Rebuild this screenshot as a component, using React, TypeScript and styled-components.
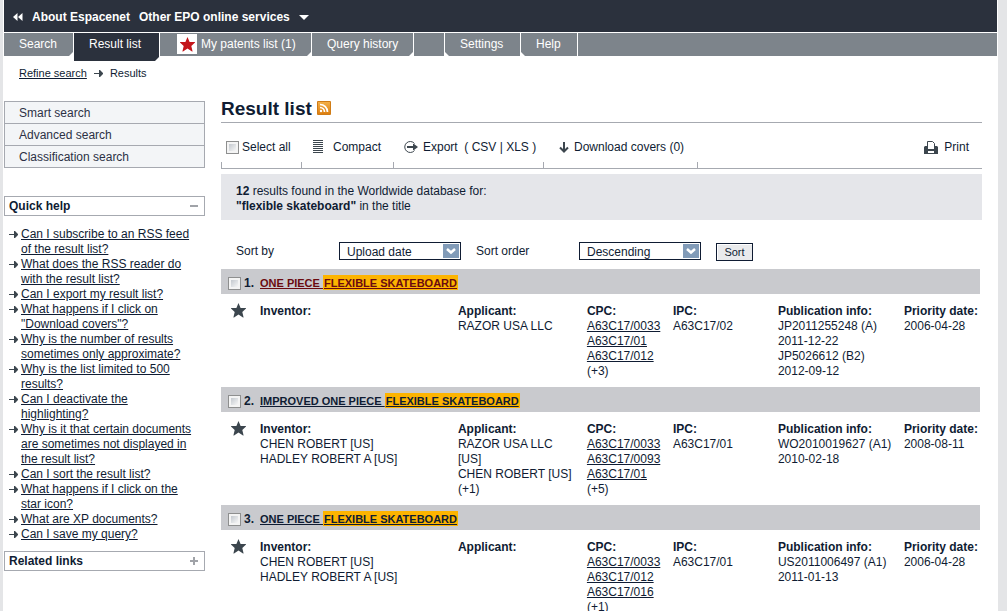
import React from "react";
import styled, { createGlobalStyle } from "styled-components";

const ink = "#0f1c33";
const navy = "#2b313d";
const steel = "#7d848b";
const line = "#a6a9b0";
const iconInk = "#3c464e";

const GlobalStyle = createGlobalStyle`
  * { box-sizing: border-box; }
  html { scrollbar-width: none; background: #e4e5e7; }
  body {
    margin: 0;
    font: 12px/15px "Liberation Sans", Arial, sans-serif;
    color: ${ink};
  }
  a { color: inherit; }
`;

const Viewport = styled.div`
  height: 100vh;
  overflow-y: auto;
  scrollbar-width: none;
  background: #e4e5e7;
`;

const Page = styled.div`
  min-height: 100%;
  margin: 0 9px 0 3px;
  padding: 0 1px;
  background: #fff;
`;

const TopBar = styled.header`
  display: flex;
  align-items: center;
  gap: 9px;
  height: 32px;
  padding: 2px 9px 0;
  background: ${navy};
  color: #fff;
  font-weight: bold;
`;

const TopLink = styled.a`
  display: flex;
  align-items: center;
  gap: 9px;
  text-decoration: none;
`;

const MenuButton = styled.button`
  display: flex;
  align-items: center;
  gap: 9px;
  padding: 0;
  border: 0;
  background: none;
  color: inherit;
  font: inherit;
`;

const Nav = styled.nav`
  display: flex;
  align-items: flex-start;
  gap: 1px;
  height: 29px;
  padding-top: 1px;
`;

const shapes = {
  right: "polygon(0 0, 100% 0, 100% calc(100% - 4px), calc(100% - 4px) 100%, 0 100%)",
  left: "polygon(0 0, 100% 0, 100% 100%, 4px 100%, 0 calc(100% - 4px))",
};

const Tab = styled.a<{ $width: number; $cut: keyof typeof shapes; $active?: boolean }>`
  display: flex;
  align-items: center;
  gap: 4px;
  width: ${(p) => p.$width}px;
  height: ${(p) => (p.$active ? 28 : 23)}px;
  padding-left: 15px;
  padding-bottom: ${(p) => (p.$active ? 6 : 1)}px;
  background: ${(p) => (p.$active ? navy : steel)};
  clip-path: ${(p) => shapes[p.$cut]};
  color: #fff;
  text-decoration: none;
  white-space: nowrap;
`;

const TabFill = styled.span<{ $width?: number }>`
  flex: ${(p) => (p.$width ? `0 0 ${p.$width}px` : "1")};
  height: 23px;
  background: ${steel};
`;

const StarBox = styled.span`
  display: flex;
  align-items: center;
  justify-content: center;
  width: 20px;
  height: 20px;
  margin-left: 2px;
  background: #fff;
`;

const Breadcrumb = styled.nav`
  display: flex;
  align-items: center;
  gap: 7px;
  height: 24px;
  padding-left: 15px;
  font-size: 11px;
`;

const Columns = styled.div`
  display: flex;
  gap: 16px;
  padding: 16px 15px 0 0;
`;

const Sidebar = styled.aside`
  flex: 0 0 201px;
`;

const SideMenu = styled.ul`
  margin: 0 0 28px;
  padding: 0;
  list-style: none;
  border: 1px solid ${line};
  background: #f3f5f7;
`;

const SideItem = styled.li`
  padding: 4px 14px 2px;
  & + & { border-top: 1px solid ${line}; }
  a { text-decoration: none; color: #2c3145; }
`;

const PanelButton = styled.button`
  display: flex;
  align-items: center;
  justify-content: space-between;
  width: 100%;
  height: 20px;
  padding: 0 5px 0 4px;
  border: 1px solid ${line};
  background: #fff;
  color: ${ink};
  font: bold 12px/15px "Liberation Sans", Arial, sans-serif;
`;

const HelpList = styled.ul`
  margin: 11px 0 9px;
  padding: 0 8px 0 5px;
  list-style: none;
`;

const HelpItem = styled.li`
  display: flex;
  gap: 3px;
  svg { flex: none; margin-top: 3px; }
`;

const HelpLink = styled.a`
  white-space: pre-line;
`;

const Main = styled.main`
  flex: 1;
  min-width: 0;
`;

const TitleRow = styled.div`
  display: flex;
  gap: 5px;
  height: 22px;
  border-bottom: 1px solid ${line};
`;

const Title = styled.h1`
  margin: 0;
  font-size: 19px;
  line-height: 16px;
`;

const Toolbar = styled.div`
  display: flex;
  align-items: flex-end;
  height: 46px;
  margin-bottom: 5px;
  border-bottom: 1px solid ${line};
`;

const Tool = styled.div<{ $width: number; $gap: number; $indent: number }>`
  position: relative;
  display: flex;
  align-items: center;
  gap: ${(p) => p.$gap}px;
  flex: 0 0 ${(p) => p.$width}px;
  height: 45px;
  padding: 3px 0 0 ${(p) => p.$indent}px;
  white-space: nowrap;
  a { text-decoration: none; }
  &::before {
    content: "";
    position: absolute;
    left: 0;
    bottom: 0;
    width: 1px;
    height: 6px;
    background: ${line};
  }
`;

const PrintTool = styled(Tool)`
  flex: 1;
  justify-content: flex-end;
  padding-right: 13px;
`;

const Check = styled.input.attrs({ type: "checkbox" })`
  appearance: none;
  flex: none;
  width: 13px;
  height: 13px;
  margin: 0;
  border: 1px solid #8e8f8f;
  background: linear-gradient(135deg, #c4c9cf, #f6f6f6) content-box, #f4f4f4;
  padding: 2px;
`;

const Summary = styled.p`
  margin: 0;
  padding: 10px 15px 6px;
  background: #e5e6ea;
`;

const SortForm = styled.form`
  display: flex;
  align-items: center;
  height: 49px;
  padding: 13px 15px 0;
`;

const SortLabel = styled.label`
  flex: 0 0 103px;
`;

const SelectBox = styled.span`
  position: relative;
  flex: 0 0 122px;
  margin-right: 15px;
  svg { position: absolute; right: 2px; top: 2px; pointer-events: none; }
`;

const Select = styled.select`
  appearance: none;
  display: block;
  width: 100%;
  height: 18px;
  padding: 2px 20px 0 7px;
  border: 1px solid ${ink};
  border-radius: 0;
  background: #fff;
  color: ${ink};
  font: 12px/15px "Liberation Sans", Arial, sans-serif;
`;

const SortButton = styled.button`
  width: 37px;
  height: 18px;
  margin-top: 2px;
  padding: 0;
  border: 1px solid ${ink};
  background: #e9eaec;
  box-shadow: inset 1px 1px #fff;
  color: ${ink};
  font: 11px/15px "Liberation Sans", Arial, sans-serif;
`;

const Results = styled.table`
  width: calc(100% - 2px);
  table-layout: fixed;
  border-collapse: collapse;
`;

const ResultHead = styled.th`
  height: 25px;
  padding: 0 7px;
  background: #c9cace;
  text-align: left;
`;

const HeadLine = styled.div`
  display: flex;
  align-items: center;
  padding-top: 3px;
  label { display: flex; align-items: center; gap: 3px; width: 32px; }
`;

const DocLink = styled.a<{ $visited?: boolean }>`
  color: ${(p) => (p.$visited ? "#6b0a10" : ink)};
  font-size: 11px;
  white-space: pre;
`;

const Mark = styled.mark`
  background: #fdb400;
  color: inherit;
  padding: 2px 1px 1px;
`;

const Cell = styled.td`
  height: 93px;
  padding: 10px 0 0;
  vertical-align: top;
  white-space: nowrap;
`;

const StarCell = styled(Cell)`
  padding: 9px 0 0 10px;
`;

const CellLabel = styled.strong`
  display: block;
`;

const CellLine = styled.span`
  display: block;
`;

const Star = ({ fill = iconInk }: { fill?: string }) => (
  <svg width="15" height="15" viewBox="0 0 15 15" fill={fill} aria-hidden="true">
    <path d="M7.5 0 L9.6 5 H15 V5.600 L11.300 9 L12.6 14.6 H12 L7.5 11.400 L3 14.6 H2.400 L3.700 9 L0 5.600 V5 H5.4 Z" />
  </svg>
);

const Arrow = () => (
  <svg width="9" height="9" viewBox="0 0 9 9" aria-hidden="true">
    <path d="M0 4 H5 V1 H6 L9 4 V5 L6 8 H5 V5 H0 Z" fill={iconInk} />
  </svg>
);

const Rewind = () => (
  <svg width="10" height="8" viewBox="0 0 10 8" fill="#fff" aria-hidden="true">
    <path d="M4.500 0 V8 L0 4 Z M9.500 0 V8 L5 4 Z" />
  </svg>
);

const Caret = () => (
  <svg width="10" height="5" viewBox="0 0 10 5" fill="#fff" aria-hidden="true">
    <path d="M0 0 H10 L5 5 Z" />
  </svg>
);

const Rss = () => (
  <svg width="14" height="14" viewBox="0 0 14 14" fill="none" aria-hidden="true">
    <defs>
      <linearGradient id="rss" x1="0" y1="0" x2="0" y2="1">
        <stop offset="0" stopColor="#f3b04a" />
        <stop offset="1" stopColor="#dd7f10" />
      </linearGradient>
    </defs>
    <rect width="14" height="14" rx="1" fill="#d07c16" />
    <rect x="1" y="1" width="12" height="12" fill="url(#rss)" />
    <path d="M3 3.500 A7.500 7.500 0 0 1 10.500 11 M3 6.500 A4.500 4.500 0 0 1 7.500 11" stroke="#fff" strokeWidth="1.700" />
    <circle cx="4" cy="10" r="1.200" fill="#fff" />
  </svg>
);

const Lines = () => (
  <svg width="10" height="14" viewBox="0 0 10 14" aria-hidden="true">
    <path d="M0 .5H10M0 2.500H10M0 4.500H10M0 6.500H10M0 8.500H10M0 10.500H10M0 12.500H10" stroke={iconInk} />
  </svg>
);

const ExportIcon = () => (
  <svg width="14" height="12" viewBox="0 0 14 12" fill="none" aria-hidden="true">
    <path d="M10.500 2.500 A5.500 5.500 0 1 0 10.500 9.500" stroke={iconInk} />
    <path d="M3 5 H9 V3 H10 L14 6 L10 9 H9 V7 H3 Z" fill={iconInk} />
  </svg>
);

const DownIcon = () => (
  <svg width="10" height="11" viewBox="0 0 10 11" fill="none" aria-hidden="true">
    <path d="M5 0 V9 M1 5.500 L5 9.500 L9 5.500" stroke={iconInk} strokeWidth="2" />
  </svg>
);

const PrintIcon = () => (
  <svg width="14" height="13" viewBox="0 0 14 13" aria-hidden="true">
    <path d="M3.500 8 V.5 H8.500 L10.500 2.500 V8" fill="#fff" stroke={iconInk} />
    <path d="M1 5 H3 V8 H11 V5 H13 L14 6 V13 H0 V6 Z" fill={iconInk} />
    <rect x="4" y="10" width="6" height="2" fill="#fff" />
  </svg>
);

const Chevron = () => (
  <svg width="16" height="14" viewBox="0 0 16 14" fill="none" aria-hidden="true">
    <rect width="16" height="14" fill="#819bb8" />
    <path d="M4 5 L8 8.500 L12 5" stroke="#fff" strokeWidth="2.500" />
  </svg>
);

const Sign = ({ plus }: { plus?: boolean }) => (
  <svg width="10" height="8" viewBox="0 0 10 8" aria-hidden="true">
    <path d={plus ? "M1 4 H9 M5 0 V8" : "M1 4 H9"} stroke="#a0a3a8" strokeWidth="2" />
  </svg>
);

const helpTopics = [
  "Can I subscribe to an RSS feed\nof the result list?",
  "What does the RSS reader do\nwith the result list?",
  "Can I export my result list?",
  "What happens if I click on\n\"Download covers\"?",
  "Why is the number of results\nsometimes only approximate?",
  "Why is the list limited to 500\nresults?",
  "Can I deactivate the\nhighlighting?",
  "Why is it that certain documents\nare sometimes not displayed in\nthe result list?",
  "Can I sort the result list?",
  "What happens if I click on the\nstar icon?",
  "What are XP documents?",
  "Can I save my query?",
];

interface Result {
  prefix: string;
  visited?: boolean;
  inventors: string[];
  applicants: string[];
  cpc: string[];
  more: string;
  ipc: string;
  publication: string[];
  priority: string;
}

const results: Result[] = [
  {
    prefix: "ONE PIECE ",
    visited: true,
    inventors: [],
    applicants: ["RAZOR USA LLC"],
    cpc: ["A63C17/0033", "A63C17/01", "A63C17/012"],
    more: "(+3)",
    ipc: "A63C17/02",
    publication: ["JP2011255248 (A)", "2011-12-22", "JP5026612 (B2)", "2012-09-12"],
    priority: "2006-04-28",
  },
  {
    prefix: "IMPROVED ONE PIECE ",
    inventors: ["CHEN ROBERT [US]", "HADLEY ROBERT A [US]"],
    applicants: ["RAZOR USA LLC", "[US]", "CHEN ROBERT [US]", "(+1)"],
    cpc: ["A63C17/0033", "A63C17/0093", "A63C17/01"],
    more: "(+5)",
    ipc: "A63C17/01",
    publication: ["WO2010019627 (A1)", "2010-02-18"],
    priority: "2008-08-11",
  },
  {
    prefix: "ONE PIECE ",
    inventors: ["CHEN ROBERT [US]", "HADLEY ROBERT A [US]"],
    applicants: [],
    cpc: ["A63C17/0033", "A63C17/012", "A63C17/016"],
    more: "(+1)",
    ipc: "A63C17/01",
    publication: ["US2011006497 (A1)", "2011-01-13"],
    priority: "2006-04-28",
  },
];

const Field = ({ label, lines }: { label: string; lines: string[] }) => (
  <Cell>
    <CellLabel>{label}</CellLabel>
    {lines.map((text) => (
      <CellLine key={text}>{text}</CellLine>
    ))}
  </Cell>
);

const ResultRows = ({ item, index }: { item: Result; index: number }) => (
  <>
    <tr>
      <ResultHead colSpan={7}>
        <HeadLine>
          <label><Check />{index}.</label>
          <DocLink href="#doc" $visited={item.visited}>
            {item.prefix}
            <Mark>FLEXIBLE SKATEBOARD</Mark>
          </DocLink>
        </HeadLine>
      </ResultHead>
    </tr>
    <tr>
      <StarCell><Star /></StarCell>
      <Field label="Inventor:" lines={item.inventors} />
      <Field label="Applicant:" lines={item.applicants} />
      <Cell>
        <CellLabel>CPC:</CellLabel>
        {item.cpc.map((code) => (
          <CellLine key={code}><a href="#cpc">{code}</a></CellLine>
        ))}
        <CellLine>{item.more}</CellLine>
      </Cell>
      <Field label="IPC:" lines={[item.ipc]} />
      <Field label="Publication info:" lines={item.publication} />
      <Field label="Priority date:" lines={[item.priority]} />
    </tr>
  </>
);

export default function App() {
  return (
    <Viewport>
      <GlobalStyle />
      <Page>
        <TopBar>
          <TopLink href="#about"><Rewind />About Espacenet</TopLink>
          <MenuButton type="button">Other EPO online services<Caret /></MenuButton>
        </TopBar>
        <Nav>
          <Tab href="#search" $width={69} $cut="right">Search</Tab>
          <Tab href="#results" $width={85} $cut="right" $active>Result list</Tab>
          <Tab href="#patents" $width={151} $cut="right">
            <StarBox><Star fill="#c4161c" /></StarBox>My patents list (1)
          </Tab>
          <Tab href="#history" $width={101} $cut="right">Query history</Tab>
          <TabFill $width={30} />
          <Tab href="#settings" $width={75} $cut="left">Settings</Tab>
          <Tab href="#help" $width={56} $cut="left">Help</Tab>
          <TabFill />
        </Nav>
        <Breadcrumb>
          <a href="#refine">Refine search</a>
          <Arrow />
          <span>Results</span>
        </Breadcrumb>
        <Columns>
          <Sidebar>
            <SideMenu>
              <SideItem><a href="#smart">Smart search</a></SideItem>
              <SideItem><a href="#advanced">Advanced search</a></SideItem>
              <SideItem><a href="#classification">Classification search</a></SideItem>
            </SideMenu>
            <PanelButton type="button">Quick help<Sign /></PanelButton>
            <HelpList>
              {helpTopics.map((topic) => (
                <HelpItem key={topic}>
                  <Arrow />
                  <HelpLink href="#topic">{topic}</HelpLink>
                </HelpItem>
              ))}
            </HelpList>
            <PanelButton type="button">Related links<Sign plus /></PanelButton>
          </Sidebar>
          <Main>
            <TitleRow>
              <Title>Result list</Title>
              <Rss />
            </TitleRow>
            <Toolbar>
              <Tool as="label" $width={80} $gap={3} $indent={5}><Check />Select all</Tool>
              <Tool $width={92} $gap={10} $indent={12}><Lines /><a href="#compact">Compact</a></Tool>
              <Tool $width={150} $gap={5} $indent={11}>
                <ExportIcon />
                <span>Export&nbsp; ( <a href="#csv">CSV</a> | <a href="#xls">XLS</a> )</span>
              </Tool>
              <Tool $width={154} $gap={5} $indent={16}><DownIcon /><a href="#covers">Download covers (0)</a></Tool>
              <PrintTool $width={60} $gap={6} $indent={0}><PrintIcon /><a href="#print">Print</a></PrintTool>
            </Toolbar>
            <Summary>
              <strong>12</strong> results found in the Worldwide database for:
              <br />
              <strong>"flexible skateboard"</strong> in the title
            </Summary>
            <SortForm>
              <SortLabel htmlFor="sort-by">Sort by</SortLabel>
              <SelectBox>
                <Select id="sort-by"><option>Upload date</option></Select>
                <Chevron />
              </SelectBox>
              <SortLabel htmlFor="sort-order">Sort order</SortLabel>
              <SelectBox>
                <Select id="sort-order"><option>Descending</option></Select>
                <Chevron />
              </SelectBox>
              <SortButton type="button">Sort</SortButton>
            </SortForm>
            <Results>
              <colgroup>
                <col width="39" />
                <col />
                <col width="129" />
                <col width="86" />
                <col width="105" />
                <col width="126" />
                <col width="76" />
              </colgroup>
              <tbody>
                {results.map((item, i) => (
                  <ResultRows key={i} item={item} index={i + 1} />
                ))}
              </tbody>
            </Results>
          </Main>
        </Columns>
      </Page>
    </Viewport>
  );
}
